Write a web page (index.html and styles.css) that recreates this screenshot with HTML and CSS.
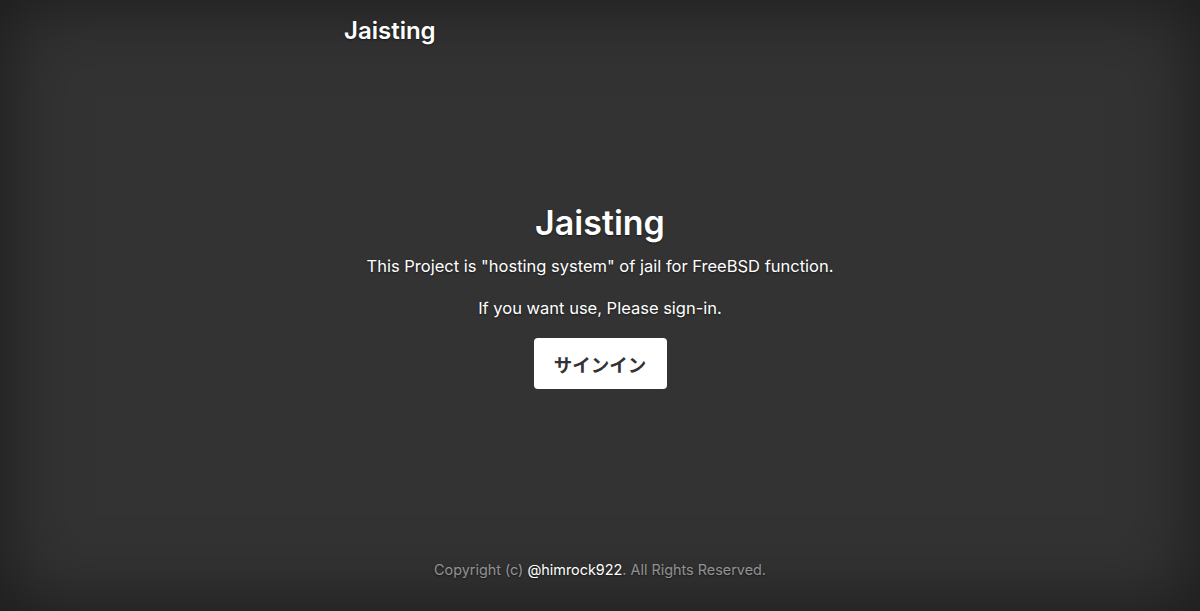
FILE: index.html
```html
<!DOCTYPE html>
<html lang="ja">
<head>
<meta charset="utf-8">
<title>Jaisting</title>
<link rel="stylesheet" href="styles.css">
</head>
<body>
<div class="cover">
  <header class="masthead">
    <h3 class="brand">Jaisting</h3>
  </header>
  <main class="inner">
    <h1 class="heading">Jaisting</h1>
    <p class="lead">This Project is "hosting system" of jail for FreeBSD function.</p>
    <p class="lead">If you want use, Please sign-in.</p>
    <a href="#" class="btn">サインイン</a>
  </main>
  <footer class="mastfoot">
    <p>Copyright (c) <a href="#">@himrock922</a>. All Rights Reserved.</p>
  </footer>
</div>
</body>
</html>
```
FILE: styles.css
```css
html, body {
  height: 100%;
}
body {
  margin: 0;
  background: #333;
  color: #fff;
  font-family: Inter, "Noto Sans CJK JP", sans-serif;
  text-shadow: 0 1px 2px rgba(0,0,0,.5);
  box-shadow: inset 0 0 80px rgba(0,0,0,.5);
  display: flex;
}
.cover {
  width: 512px;
  margin: 0 auto;
  display: flex;
  flex-direction: column;
  text-align: center;
}
.masthead {
  padding-top: 14px;
  margin-bottom: auto;
}
.brand {
  margin: 0;
  text-align: left;
  font-size: 24px;
  font-weight: 600;
  line-height: 34px;
}
.inner {
  display: flex;
  flex-direction: column;
  align-items: center;
  margin-bottom: 18px;
}
.heading {
  margin: 0 0 10px;
  font-size: 34px;
  font-weight: 600;
  line-height: 42px;
}
.lead {
  margin: 0 0 17px;
  font-size: 16.5px;
  line-height: 25px;
}
.btn {
  display: inline-flex;
  align-items: center;
  justify-content: center;
  width: 133px;
  height: 51px;
  box-sizing: border-box;
  background: #fff;
  color: #333;
  border-radius: 4px;
  text-decoration: none;
  text-shadow: none;
  font-family: "Noto Sans CJK JP", sans-serif;
  font-weight: 700;
  font-size: 18.5px;
}
.mastfoot {
  margin-top: auto;
  color: rgba(255,255,255,.5);
  font-size: 14.4px;
}
.mastfoot p {
  margin: 0 0 33px;
}
.mastfoot a {
  color: #fff;
  text-decoration: none;
}
```
